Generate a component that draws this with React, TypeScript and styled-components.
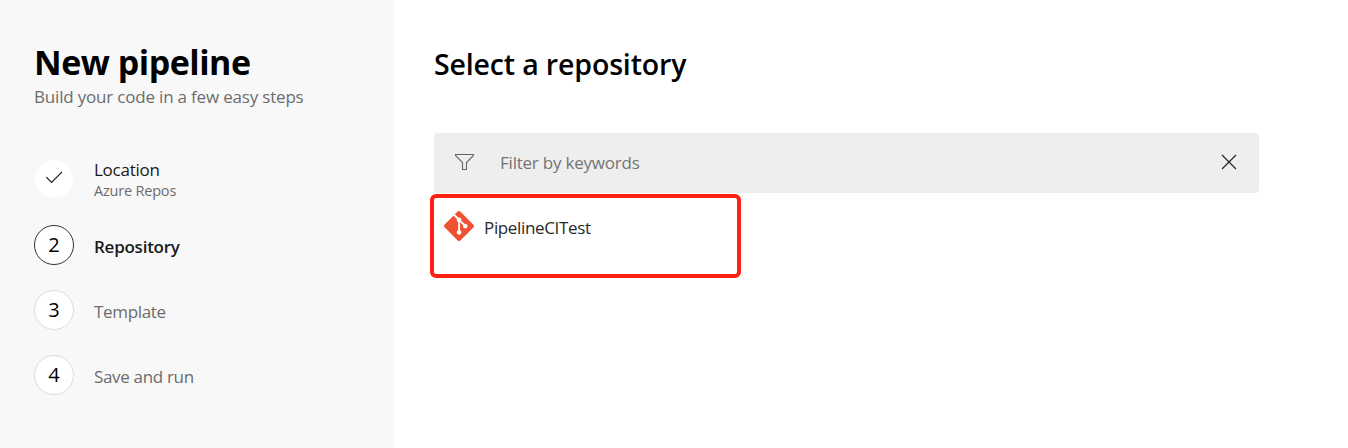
import React from "react";
import styled, { createGlobalStyle } from "styled-components";
import { SiGit } from "react-icons/si";

const GlobalStyle = createGlobalStyle`
  *, *::before, *::after { box-sizing: border-box; }
  body {
    margin: 0;
    background: #ffffff;
    font-family: "Open Sans", "Noto Sans", sans-serif;
    color: #000000;
  }
  h1, h2, p, ol { margin: 0; padding: 0; }
`;

const Page = styled.div`
  display: flex;
  height: 448px;
  overflow: hidden;
`;

const Sidebar = styled.aside`
  width: 394px;
  flex: none;
  padding: 42px 34px 0;
  background: #f8f8f8;
`;

const Title = styled.h1`
  font-size: 34px;
  font-weight: 700;
  line-height: 40px;
  letter-spacing: -0.48px;
  white-space: nowrap;
`;

const Subtitle = styled.p`
  margin-top: 3px;
  font-size: 17px;
  line-height: 24px;
  letter-spacing: -0.19px;
  color: #6c6c6c;
  white-space: nowrap;
`;

const Steps = styled.ol`
  display: flex;
  flex-direction: column;
  gap: 25px;
  margin-top: 50px;
  list-style: none;
`;

type StepState = "done" | "current" | "pending";

const StepItem = styled.li<{ $state: StepState }>`
  display: flex;
  align-items: center;
  gap: 20px;
  height: 40px;
  margin-bottom: ${(p) => (p.$state === "done" ? "1px" : "0")};
`;

const borderColors: Record<StepState, string> = {
  done: "#f8f8f8",
  current: "#333333",
  pending: "#dcdcdc",
};

const Marker = styled.span<{ $state: StepState }>`
  display: flex;
  align-items: center;
  justify-content: center;
  width: 40px;
  height: 40px;
  flex: none;
  border: 1px solid ${(p) => borderColors[p.$state]};
  border-radius: 50%;
  background: #ffffff;
  font-size: 20px;
  line-height: 38px;
`;

const StepText = styled.div`
  display: flex;
  flex-direction: column;
`;

const StepLabel = styled.span<{ $state: StepState }>`
  padding-top: ${(p) => (p.$state === "done" ? "2px" : "3px")};
  font-size: 17px;
  line-height: 22px;
  font-weight: ${(p) => (p.$state === "current" ? 600 : 400)};
  letter-spacing: ${(p) => (p.$state === "pending" ? "-0.33px" : "-0.25px")};
  color: ${(p) => (p.$state === "pending" ? "#6c6c6c" : "#1a1a1a")};
  white-space: nowrap;
`;

const StepDetail = styled.span`
  font-size: 14.5px;
  line-height: 20px;
  letter-spacing: -0.2px;
  color: #6c6c6c;
`;

const Main = styled.main`
  flex: 1;
  padding: 44px 0 0 40px;
`;

const Heading = styled.h2`
  font-size: 28.5px;
  font-weight: 600;
  line-height: 40px;
  letter-spacing: -0.15px;
`;

const FilterBar = styled.div`
  display: flex;
  align-items: center;
  width: 825px;
  height: 60px;
  margin-top: 49px;
  padding: 0 20px 2px;
  border-radius: 4px;
  background: #eeeeee;
`;

const FilterText = styled.span`
  flex: 1;
  margin-left: 25px;
  padding-top: 2px;
  font-size: 17px;
  letter-spacing: -0.22px;
  line-height: 24px;
  color: #747474;
`;

const RepositoryRow = styled.div`
  display: flex;
  align-items: flex-start;
  width: 311px;
  height: 84px;
  margin: 1px 0 0 -4px;
  padding: 13px 10px;
  border: 4px solid #ff2015;
  border-radius: 6px;
`;

const RepositoryName = styled.span`
  margin: 5px 0 0 10px;
  font-size: 17px;
  line-height: 24px;
  letter-spacing: -0.35px;
  color: #2a2a2a;
`;

const CheckMark = styled.svg`
  display: block;
  margin-bottom: 2px;
`;

const CheckIcon = () => (
  <CheckMark width="18" height="14" viewBox="0 0 18 14" fill="none" stroke="#222" strokeWidth="1.3">
    <path d="M1.3 6.1 6.6 11.4 17 0.9" />
  </CheckMark>
);

const FilterIcon = () => (
  <svg width="21" height="18" viewBox="0 0 21 18" fill="none" stroke="#666" strokeWidth="1.1">
    <path d="M1.5 1.5h18v1l-7 7v7h-4v-7l-7-7z" />
  </svg>
);

const CloseIcon = () => (
  <svg width="20" height="20" viewBox="0 0 20 20" fill="none" stroke="#222" strokeWidth="1.2">
    <path d="m3 3 14 14M17 3 3 17" />
  </svg>
);

const steps: { label: string; detail?: string; state: StepState }[] = [
  { label: "Location", detail: "Azure Repos", state: "done" },
  { label: "Repository", state: "current" },
  { label: "Template", state: "pending" },
  { label: "Save and run", state: "pending" },
];

export default function App() {
  return (
    <>
      <GlobalStyle />
      <Page>
        <Sidebar>
          <Title>New pipeline</Title>
          <Subtitle>Build your code in a few easy steps</Subtitle>
          <Steps>
            {steps.map((step, i) => (
              <StepItem key={step.label} $state={step.state}>
                <Marker $state={step.state}>{step.state === "done" ? <CheckIcon /> : i + 1}</Marker>
                <StepText>
                  <StepLabel $state={step.state}>{step.label}</StepLabel>
                  {step.detail && <StepDetail>{step.detail}</StepDetail>}
                </StepText>
              </StepItem>
            ))}
          </Steps>
        </Sidebar>
        <Main>
          <Heading>Select a repository</Heading>
          <FilterBar>
            <FilterIcon />
            <FilterText>Filter by keywords</FilterText>
            <CloseIcon />
          </FilterBar>
          <RepositoryRow>
            <SiGit size={30} color="#f05133" />
            <RepositoryName>PipelineCITest</RepositoryName>
          </RepositoryRow>
        </Main>
      </Page>
    </>
  );
}
